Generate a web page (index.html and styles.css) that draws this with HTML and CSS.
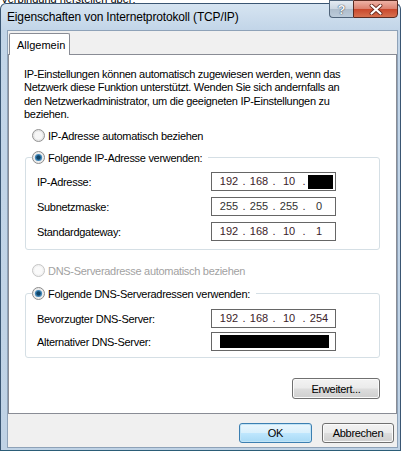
FILE: index.html
```html
<!DOCTYPE html>
<html lang="de">
<head>
<meta charset="utf-8">
<title>Eigenschaften von Internetprotokoll (TCP/IP)</title>
<link rel="stylesheet" href="styles.css">
</head>
<body>
<div class="screen">
  <div class="behind"><span>Verbindung herstellen über:</span></div>
  <div class="window">
    <div class="titlebar">
      <span class="title">Eigenschaften von Internetprotokoll (TCP/IP)</span>
      <div class="caption">
        <div class="cbtn help">?</div>
        <div class="cbtn close">
          <svg width="14" height="11" viewBox="0 0 14 11"><path d="M2.5 1.5 L11.5 9.5 M11.5 1.5 L2.5 9.5" stroke="#6b2a1e" stroke-width="3.8" stroke-linecap="round"/><path d="M2.5 1.5 L11.5 9.5 M11.5 1.5 L2.5 9.5" stroke="#fff" stroke-width="2.2" stroke-linecap="round"/></svg>
        </div>
      </div>
    </div>
    <div class="client">
      <div class="tabs"><div class="tab">Allgemein</div></div>
      <div class="panel">
        <p class="intro">IP-Einstellungen können automatisch zugewiesen werden, wenn das<br>Netzwerk diese Funktion unterstützt. Wenden Sie sich andernfalls an<br>den Netzwerkadministrator, um die geeigneten IP-Einstellungen zu<br>beziehen.</p>

        <div class="radio-row r-ipauto">
          <svg class="rb" width="13" height="13" viewBox="0 0 13 13"><circle cx="6.5" cy="6.5" r="6" fill="#e6e6e6" stroke="#939393"/><circle cx="6.5" cy="6.5" r="4" fill="#f6f6f6"/></svg>
          <span>IP-Adresse automatisch beziehen</span>
        </div>

        <div class="group g-ip">
          <div class="radio-row legend">
            <svg class="rb" width="13" height="13" viewBox="0 0 13 13"><circle cx="6.5" cy="6.5" r="6" fill="#ececec" stroke="#8c8c8c"/><circle cx="6.5" cy="6.5" r="3.6" fill="#3f86b8"/><circle cx="6.5" cy="6.5" r="2.2" fill="#0f4468"/></svg>
            <span>Folgende IP-Adresse verwenden:</span>
          </div>
          <div class="rows rows-ip">
            <div class="row">
              <span>IP-Adresse:</span>
              <div class="ip"><span class="oct">192</span><span class="dot">.</span><span class="oct">168</span><span class="dot">.</span><span class="oct">10</span><span class="dot">.</span><span class="oct"><span class="mask"></span></span></div>
            </div>
            <div class="row">
              <span>Subnetzmaske:</span>
              <div class="ip gray"><span class="oct">255</span><span class="dot">.</span><span class="oct">255</span><span class="dot">.</span><span class="oct">255</span><span class="dot">.</span><span class="oct">0</span></div>
            </div>
            <div class="row">
              <span>Standardgateway:</span>
              <div class="ip"><span class="oct">192</span><span class="dot">.</span><span class="oct">168</span><span class="dot">.</span><span class="oct">10</span><span class="dot">.</span><span class="oct">1</span></div>
            </div>
          </div>
        </div>

        <div class="radio-row r-dnsauto disabled">
          <svg class="rb" width="13" height="13" viewBox="0 0 13 13"><circle cx="6.5" cy="6.5" r="6" fill="#f2f2f2" stroke="#c4c4c4"/><circle cx="6.5" cy="6.5" r="4" fill="#fafafa"/></svg>
          <span>DNS-Serveradresse automatisch beziehen</span>
        </div>

        <div class="group g-dns">
          <div class="radio-row legend">
            <svg class="rb" width="13" height="13" viewBox="0 0 13 13"><circle cx="6.5" cy="6.5" r="6" fill="#ececec" stroke="#8c8c8c"/><circle cx="6.5" cy="6.5" r="3.6" fill="#3f86b8"/><circle cx="6.5" cy="6.5" r="2.2" fill="#0f4468"/></svg>
            <span>Folgende DNS-Serveradressen verwenden:</span>
          </div>
          <div class="rows rows-dns">
            <div class="row">
              <span>Bevorzugter DNS-Server:</span>
              <div class="ip"><span class="oct">192</span><span class="dot">.</span><span class="oct">168</span><span class="dot">.</span><span class="oct">10</span><span class="dot">.</span><span class="oct">254</span></div>
            </div>
            <div class="row">
              <span>Alternativer DNS-Server:</span>
              <div class="ip masked"><span class="mask-wide"></span></div>
            </div>
          </div>
        </div>

        <button class="btn adv">Erweitert...</button>
      </div>
      <div class="footer">
        <button class="btn default ok">OK</button>
        <button class="btn cancel">Abbrechen</button>
      </div>
    </div>
  </div>
</div>
</body>
</html>
```
FILE: styles.css
```css
* { box-sizing: border-box; }

body {
  margin: 0;
  background: #ffffff;
  font-family: "Liberation Sans", Arial, sans-serif;
  font-size: 11px;
  color: #000;
}

.screen {
  width: 404px;
  height: 454px;
  display: flex;
  flex-direction: column;
  overflow: hidden;
}

.behind {
  height: 3px;
  overflow: hidden;
  display: flex;
  align-items: flex-end;
  padding-left: 1px;
  font-size: 11px;
  line-height: 13px;
}
.behind span { flex: none; margin-bottom: -3px; }

.window {
  width: 401px;
  height: 448px;
  border: 1px solid #3a5673;
  border-bottom-color: #2b5d77;
  border-radius: 6px 6px 0 0;
  background: linear-gradient(#d6e4f1, #c2d5e8 26px, #bfd2e5);
  display: flex;
  flex-direction: column;
}

.titlebar {
  height: 26px;
  flex: none;
  display: flex;
  padding: 0 2px 0 6px;
}

.title {
  align-self: center;
  font-size: 12px;
  line-height: 14px;
  letter-spacing: -0.15px;
  color: #000;
}

.caption {
  margin-left: auto;
  margin-top: -4px;
  height: 18px;
  display: flex;
}

.cbtn {
  height: 18px;
  display: flex;
  align-items: center;
  justify-content: center;
  border: 1px solid #4f6379;
}

.help {
  width: 24px;
  border-right: none;
  border-radius: 0 0 0 4px;
  background: linear-gradient(#e4ebf2, #cbd6e1 48%, #aebdcc 52%, #bccbda);
  color: #f4f6f8;
  font-weight: bold;
  font-size: 13px;
  text-shadow: 0 0 1px #2f3f50, 0 0 1px #2f3f50;
}

.close {
  width: 45px;
  border-color: #5a2b22;
  border-radius: 0 0 4px 0;
  background: linear-gradient(#eeb2a5, #dc8270 48%, #c9482c 52%, #d7704f);
}

.client {
  margin: 0 2px 0 6px;
  height: 418px;
  flex: none;
  border: 1px solid #8ea2b8;
  background: #f0f0f0;
  padding-top: 2px;
  display: flex;
  flex-direction: column;
}

.tabs {
  height: 21px;
  flex: none;
  display: flex;
  padding-left: 1px;
  position: relative;
  z-index: 1;
}

.tab {
  width: 61px;
  height: 22px;
  border: 1px solid #898c95;
  border-bottom: none;
  border-radius: 2px 2px 0 0;
  background: #fff;
  padding: 1px 0 0 7px;
  line-height: 20px;
}

.panel {
  height: 360px;
  flex: none;
  border: 1px solid #898c95;
  background: #fff;
  padding: 13px 16px 14px 15px;
  display: flex;
  flex-direction: column;
}

.intro {
  margin: 0;
  line-height: 13.3px;
  letter-spacing: -0.3px;
}

.radio-row {
  display: flex;
  align-items: center;
  gap: 3px;
  height: 13px;
  letter-spacing: -0.3px;
}
.rb { flex: none; display: block; }

.r-ipauto { margin: 8px 0 0 8px; }
.r-dnsauto { margin: 14px 0 0 8px; }
.disabled { color: #a2a2a2; }

.group {
  margin-left: 1px;
  border: 1px solid #d5dfe5;
  border-radius: 3px;
  padding: 0 43px 8px 11px;
  display: flex;
  flex-direction: column;
}
.g-ip { margin-top: 15px; }
.g-dns { margin-top: 16px; padding-bottom: 6px; }

.legend {
  align-self: flex-start;
  margin: -7px 0 0 -5px;
  padding-right: 6px;
  background: #fff;
}

.rows { display: flex; flex-direction: column; }
.rows-ip { margin-top: 8px; gap: 6px; }
.rows-dns { margin-top: 9px; gap: 4px; }

.row {
  height: 19px;
  display: flex;
  align-items: center;
  justify-content: space-between;
  letter-spacing: -0.3px;
}

.ip {
  width: 125px;
  height: 19px;
  border: 1px solid #666;
  background: #fff;
  padding-left: 4px;
  display: grid;
  grid-template-columns: 26px 4px 26px 4px 26px 4px 26px;
  align-items: center;
  color: #3b2229;
  letter-spacing: 0;
  line-height: 17px;
}
.ip.gray { color: #333; }

.oct, .dot { text-align: center; }

.mask {
  display: block;
  height: 14px;
  width: 25px;
  margin-left: 2px;
  background: #000;
}

.ip.masked {
  display: block;
  padding: 2px 0 0 8px;
}
.mask-wide {
  display: block;
  width: 109px;
  height: 13px;
  background: #000;
}

.btn {
  font-family: "Liberation Sans", Arial, sans-serif;
  font-size: 11px;
  letter-spacing: -0.3px;
  color: #000;
  height: 20px;
  padding: 0;
  border: 1px solid #707070;
  border-radius: 3px;
  background: linear-gradient(#f3f3f3, #ebebeb 48%, #dddddd 52%, #cfcfcf);
  box-shadow: inset 0 0 0 1px #fbfbfb;
}

.adv {
  margin-top: auto;
  align-self: flex-end;
  width: 88px;
  height: 21px;
}

.footer {
  margin-top: 9px;
  padding-right: 3px;
  display: flex;
  justify-content: flex-end;
  gap: 10px;
}

.ok { width: 73px; }
.cancel { width: 72px; }

.default {
  border-color: #3c7fb1;
  background: linear-gradient(#eaf6fd, #d9f0fc 48%, #bee6fd 52%, #a7d9f5);
  box-shadow: inset 0 0 0 1px #c2e4f6;
}
```
